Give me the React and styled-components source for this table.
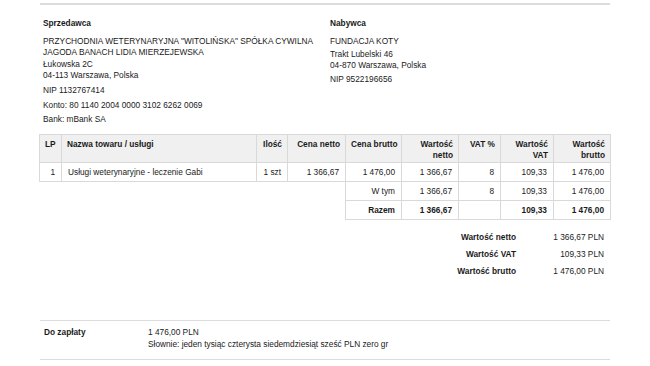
import { createGlobalStyle, styled } from "styled-components";

const GlobalStyle = createGlobalStyle`
  html, body {
    margin: 0;
    padding: 0;
    background: #fff;
  }
  body {
    font-family: "Liberation Sans", Arial, sans-serif;
    font-size: 8.3px;
    color: #1a1a1a;
  }
`;

const StyledPage = styled.div`
  width: 650px;
  height: 366px;
  overflow: hidden;
  padding: 3px 40px 0 40px;
  box-sizing: border-box;
`;

const StyledParties = styled.section`
  border-top: 2px solid #dcdcdc;
  display: grid;
  grid-template-columns: 287px 1fr;
  padding: 13px 0 0 3px;
  height: 117px;
  box-sizing: border-box;
`;

const StyledHeading = styled.h3`
  margin: 0 0 7px;
  font-size: 8.3px;
  font-weight: bold;
  line-height: 11px;
`;

const StyledLine = styled.p`
  margin: ${({ $gap }) => $gap || 0}px 0 0;
  line-height: 11px;
`;

const StyledTable = styled.table`
  border-collapse: collapse;
  table-layout: fixed;
  width: 571px;
  margin-left: -1px;
  margin-top: 14px;
`;

const StyledTh = styled.th`
  background: #f0f0f0;
  border: 1px solid #d9d9d9;
  height: 28px;
  padding: 4px 5px 0;
  box-sizing: border-box;
  vertical-align: top;
  font-weight: bold;
  line-height: 11px;
  white-space: nowrap;
  text-align: ${({ $align }) => $align || "right"};
`;

const StyledTd = styled.td`
  border: ${({ $empty }) => ($empty ? "none" : "1px solid #d9d9d9")};
  height: 19px;
  padding: 0 6px;
  box-sizing: border-box;
  vertical-align: middle;
  text-align: ${({ $align }) => $align || "right"};
  font-weight: ${({ $bold }) => ($bold ? "bold" : "normal")};
  white-space: nowrap;
`;

const StyledSummary = styled.div`
  display: grid;
  grid-template-columns: 1fr 88px;
  row-gap: 6px;
  width: 200px;
  margin: 12px 6px 0 auto;
  line-height: 11px;
`;

const StyledSummaryLabel = styled.span`
  font-weight: bold;
  text-align: right;
`;

const StyledSummaryValue = styled.span`
  text-align: right;
`;

const StyledPayment = styled.section`
  margin-top: 43px;
  border-top: 1px solid #dcdcdc;
  border-bottom: 1px solid #dcdcdc;
  display: grid;
  grid-template-columns: 104px 1fr;
  padding: 5px 4px 9px;
  line-height: 12px;
`;

const StyledPaymentLabel = styled.span`
  font-weight: bold;
`;

const columns = [22, 195, 31, 58, 56, 57, 42, 53, 57];

export default function App() {
  return (
    <>
      <GlobalStyle />
      <StyledPage>
        <StyledParties>
          <div>
            <StyledHeading>Sprzedawca</StyledHeading>
            <StyledLine>PRZYCHODNIA WETERYNARYJNA "WITOLIŃSKA" SPÓŁKA CYWILNA</StyledLine>
            <StyledLine>JAGODA BANACH LIDIA MIERZEJEWSKA</StyledLine>
            <StyledLine $gap={1}>Łukowska 2C</StyledLine>
            <StyledLine>04-113 Warszawa, Polska</StyledLine>
            <StyledLine $gap={4}>NIP 1132767414</StyledLine>
            <StyledLine $gap={4}>Konto: 80 1140 2004 0000 3102 6262 0069</StyledLine>
            <StyledLine $gap={3}>Bank: mBank SA</StyledLine>
          </div>
          <div>
            <StyledHeading>Nabywca</StyledHeading>
            <StyledLine>FUNDACJA KOTY</StyledLine>
            <StyledLine $gap={2}>Trakt Lubelski 46</StyledLine>
            <StyledLine>04-870 Warszawa, Polska</StyledLine>
            <StyledLine $gap={3}>NIP 9522196656</StyledLine>
          </div>
        </StyledParties>

        <StyledTable>
          <colgroup>
            {columns.map((w, i) => (
              <col key={i} style={{ width: w }} />
            ))}
          </colgroup>
          <thead>
            <tr>
              <StyledTh $align="left">LP</StyledTh>
              <StyledTh $align="left">Nazwa towaru / usługi</StyledTh>
              <StyledTh>Ilość</StyledTh>
              <StyledTh>Cena netto</StyledTh>
              <StyledTh>Cena brutto</StyledTh>
              <StyledTh>
                Wartość
                <br />
                netto
              </StyledTh>
              <StyledTh>VAT %</StyledTh>
              <StyledTh>
                Wartość
                <br />
                VAT
              </StyledTh>
              <StyledTh>
                Wartość
                <br />
                brutto
              </StyledTh>
            </tr>
          </thead>
          <tbody>
            <tr>
              <StyledTd>1</StyledTd>
              <StyledTd $align="left">Usługi weterynaryjne - leczenie Gabi</StyledTd>
              <StyledTd>1 szt</StyledTd>
              <StyledTd>1 366,67</StyledTd>
              <StyledTd>1 476,00</StyledTd>
              <StyledTd>1 366,67</StyledTd>
              <StyledTd>8</StyledTd>
              <StyledTd>109,33</StyledTd>
              <StyledTd>1 476,00</StyledTd>
            </tr>
            <tr>
              <StyledTd $empty colSpan={4} />
              <StyledTd>W tym</StyledTd>
              <StyledTd>1 366,67</StyledTd>
              <StyledTd>8</StyledTd>
              <StyledTd>109,33</StyledTd>
              <StyledTd>1 476,00</StyledTd>
            </tr>
            <tr>
              <StyledTd $empty colSpan={4} />
              <StyledTd $bold>Razem</StyledTd>
              <StyledTd $bold>1 366,67</StyledTd>
              <StyledTd />
              <StyledTd $bold>109,33</StyledTd>
              <StyledTd $bold>1 476,00</StyledTd>
            </tr>
          </tbody>
        </StyledTable>

        <StyledSummary>
          <StyledSummaryLabel>Wartość netto</StyledSummaryLabel>
          <StyledSummaryValue>1 366,67 PLN</StyledSummaryValue>
          <StyledSummaryLabel>Wartość VAT</StyledSummaryLabel>
          <StyledSummaryValue>109,33 PLN</StyledSummaryValue>
          <StyledSummaryLabel>Wartość brutto</StyledSummaryLabel>
          <StyledSummaryValue>1 476,00 PLN</StyledSummaryValue>
        </StyledSummary>

        <StyledPayment>
          <StyledPaymentLabel>Do zapłaty</StyledPaymentLabel>
          <div>
            <div>1 476,00 PLN</div>
            <div>Słownie: jeden tysiąc czterysta siedemdziesiąt sześć PLN zero gr</div>
          </div>
        </StyledPayment>
      </StyledPage>
    </>
  );
}
